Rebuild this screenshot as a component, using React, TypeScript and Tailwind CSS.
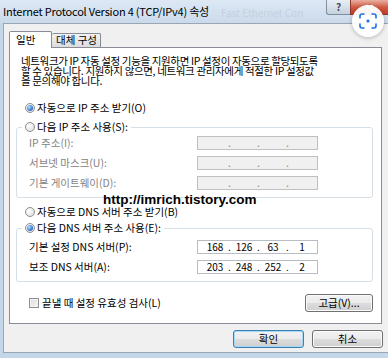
import React from "react";

function Radio({ checked }: { checked?: boolean }) {
  return (
    <span className="inline-flex h-[10px] w-[10px] shrink-0 items-center justify-center rounded-full border border-[#8e8f8f] bg-[radial-gradient(circle_at_35%_35%,#ffffff,#d9d9d9)]">
      {checked && (
        <span className="h-[6px] w-[6px] rounded-full bg-[radial-gradient(circle_at_35%_35%,#b5dcff,#2f76cf_65%,#1b4d96)]" />
      )}
    </span>
  );
}

function IpBox({ values, disabled }: { values?: string[]; disabled?: boolean }) {
  const segs = [0, 1, 2, 3];
  return (
    <div
      className={
        disabled
          ? "flex h-[14px] w-[121px] items-center border border-[#c0c0c0] bg-[#f0f0f0] pl-[4px] text-[#8d8d8d]"
          : "flex h-[14px] w-[121px] items-center border border-[#b8bcc4] bg-white pl-[4px] text-[10px] text-black"
      }
    >
      {segs.map((i) => (
        <React.Fragment key={i}>
          <span className="w-[26px] text-center leading-[12px]">{values ? values[i] : ""}</span>
          {i < 3 && <span className="w-[3px] text-center leading-[12px]">.</span>}
        </React.Fragment>
      ))}
    </div>
  );
}

function Btn({ children, primary, w }: { children: React.ReactNode; primary?: boolean; w: string }) {
  return (
    <div
      className={
        (primary
          ? "border-[#3c7fb1] shadow-[inset_0_0_0_1px_#a7d8f5] "
          : "border-[#707070] shadow-[inset_0_0_0_1px_#fbfbfb] ") +
        w +
        " flex h-[18px] items-center justify-center rounded-[3px] border bg-[linear-gradient(to_bottom,#f2f2f2_0%,#ebebeb_50%,#dddddd_50%,#cfcfcf_100%)] leading-none text-black"
      }
    >
      {children}
    </div>
  );
}

export default function App() {
  return (
    <div className="relative h-[358px] w-[388px] overflow-hidden bg-[#c4d6ea] font-['Noto_Sans_CJK_KR',sans-serif] text-[10.5px] text-black">
      {/* Title bar */}
      <div className="relative flex h-[23px] items-start bg-[linear-gradient(to_bottom,#dde8f4,#cbdaeb)]">
        <div className="whitespace-nowrap pl-[3px] pt-[4px] text-[11px] leading-[15px] tracking-[-0.2px] text-black">
          Internet Protocol Version 4 (TCP/IPv4) 속성
        </div>
        <div className="ml-[12px] whitespace-nowrap pt-[5px] text-[10px] leading-[15px] text-[#c3d0df]">Fast Ethernet Con</div>
        <div className="ml-auto flex">
          <div className="flex h-[15px] w-[24px] items-center justify-center rounded-bl-[3px] border-b border-l border-[#7f8fa3] bg-[linear-gradient(to_bottom,#e9eef4,#c6d1de)] text-[10px] font-bold leading-none text-[#3d4c5e]">
            ?
          </div>
          <div className="flex h-[15px] w-[38px] items-center justify-center border-b border-l border-[#8c3a2e] bg-[linear-gradient(to_bottom,#eab0a2,#d0553f_55%,#c0402a)] text-[11px] font-bold leading-none text-white">
            ✕
          </div>
        </div>
      </div>

      {/* Body */}
      <div className="ml-[3px] flex h-[330px] flex-col border-b border-l border-t border-[#98a6b6] bg-[#f0f0f0] pl-[5px] pr-[5px]">
        {/* Tabs */}
        <div className="mt-[7px] flex h-[16px] items-end">
          <div className="relative z-10 -mb-px flex h-[17px] w-[43px] items-center rounded-t-[2px] border border-b-0 border-[#898c95] bg-white pl-[6px] leading-none">
            일반
          </div>
          <div className="flex h-[14px] w-[49px] items-center rounded-t-[2px] border border-b-0 border-l-0 border-[#898c95] bg-[linear-gradient(to_bottom,#f3f3f3,#dcdcdc)] pl-[4px] leading-none">
            대체 구성
          </div>
        </div>

        {/* Panel */}
        <div className="flex h-[277px] w-[373px] flex-col border border-[#898c95] bg-white pr-[8px] pt-[8px]">
          <p className="pl-[11px] leading-[10px] tracking-[-0.35px]">
            네트워크가 IP 자동 설정 기능을 지원하면 IP 설정이 자동으로 할당되도록
            <br />할 수 있습니다. 지원하지 않으면, 네트워크 관리자에게 적절한 IP 설정값
            <br />을 문의해야 합니다.
          </p>

          <div className="mt-[15px] flex h-[14px] items-center gap-[2px] pl-[15px] leading-none">
            <Radio checked />
            <span>자동으로 IP 주소 받기(O)</span>
          </div>

          <fieldset className="ml-[6px] mt-[5px] rounded-[3px] border border-[#d5dfe5] pb-[7px] pl-[12px] pt-[2px]">
            <legend className="-ml-[7px] flex h-[14px] items-center gap-[2px] px-[3px] leading-none">
              <Radio />
              <span>다음 IP 주소 사용(S):</span>
            </legend>
            <div className="flex flex-col gap-[6px] text-[#838383]">
              <div className="flex items-center">
                <span className="w-[168px] leading-none">IP 주소(I):</span>
                <IpBox disabled />
              </div>
              <div className="flex items-center">
                <span className="w-[168px] leading-none">서브넷 마스크(U):</span>
                <IpBox disabled />
              </div>
              <div className="flex items-center">
                <span className="w-[168px] leading-none">기본 게이트웨이(D):</span>
                <IpBox disabled />
              </div>
            </div>
          </fieldset>

          <div className="mt-[7px] flex h-[14px] items-center gap-[2px] pl-[15px] leading-none">
            <Radio />
            <span>자동으로 DNS 서버 주소 받기(B)</span>
          </div>

          <fieldset className="ml-[6px] mt-[2px] rounded-[3px] border border-[#d5dfe5] pb-[7px] pl-[12px] pt-[5px]">
            <legend className="-ml-[7px] flex h-[14px] items-center gap-[2px] px-[3px] leading-none">
              <Radio checked />
              <span>다음 DNS 서버 주소 사용(E):</span>
            </legend>
            <div className="flex flex-col gap-[6px]">
              <div className="flex items-center">
                <span className="w-[168px] leading-none">기본 설정 DNS 서버(P):</span>
                <IpBox values={["168", "126", "63", "1"]} />
              </div>
              <div className="flex items-center">
                <span className="w-[168px] leading-none">보조 DNS 서버(A):</span>
                <IpBox values={["203", "248", "252", "2"]} />
              </div>
            </div>
          </fieldset>

          <div className="mt-[12px] flex h-[18px] items-center pl-[19px]">
            <span className="h-[10px] w-[10px] border border-[#8e8f8f] bg-[linear-gradient(135deg,#dcdcdc,#f7f7f7)] shadow-[inset_0_0_0_1px_#f4f4f4]" />
            <span className="ml-[3px] leading-none">끝낼 때 설정 유효성 검사(L)</span>
            <div className="ml-auto">
              <Btn w="w-[68px]">고급(V)...</Btn>
            </div>
          </div>
        </div>

        {/* Bottom buttons */}
        <div className="mt-[6px] flex justify-end gap-[8px]">
          <Btn primary w="w-[71px]">확인</Btn>
          <Btn w="w-[71px]">취소</Btn>
        </div>
      </div>

      {/* Watermark */}
      <div className="absolute left-[103px] top-[193px] font-['Liberation_Sans',sans-serif] text-[13.5px] font-bold leading-none text-black">
        http://imrich.tistory.com
      </div>

      {/* Screenshot overlay circle */}
      <div className="absolute left-[352px] top-[5px] flex h-[32px] w-[32px] items-center justify-center rounded-full bg-white/95 shadow-[0_1px_4px_rgba(0,0,0,0.25)]">
        <svg width="18" height="16" viewBox="0 0 18 16" fill="none" stroke="#1a73e8" strokeWidth="1.6" strokeLinecap="round">
          <path d="M1 5V3a2 2 0 0 1 2-2h2" />
          <path d="M13 1h2a2 2 0 0 1 2 2v2" />
          <path d="M17 11v2a2 2 0 0 1-2 2h-2" />
          <path d="M5 15H3a2 2 0 0 1-2-2v-2" />
          <circle cx="9" cy="8" r="1.6" fill="#1a73e8" stroke="none" />
        </svg>
      </div>
    </div>
  );
}
